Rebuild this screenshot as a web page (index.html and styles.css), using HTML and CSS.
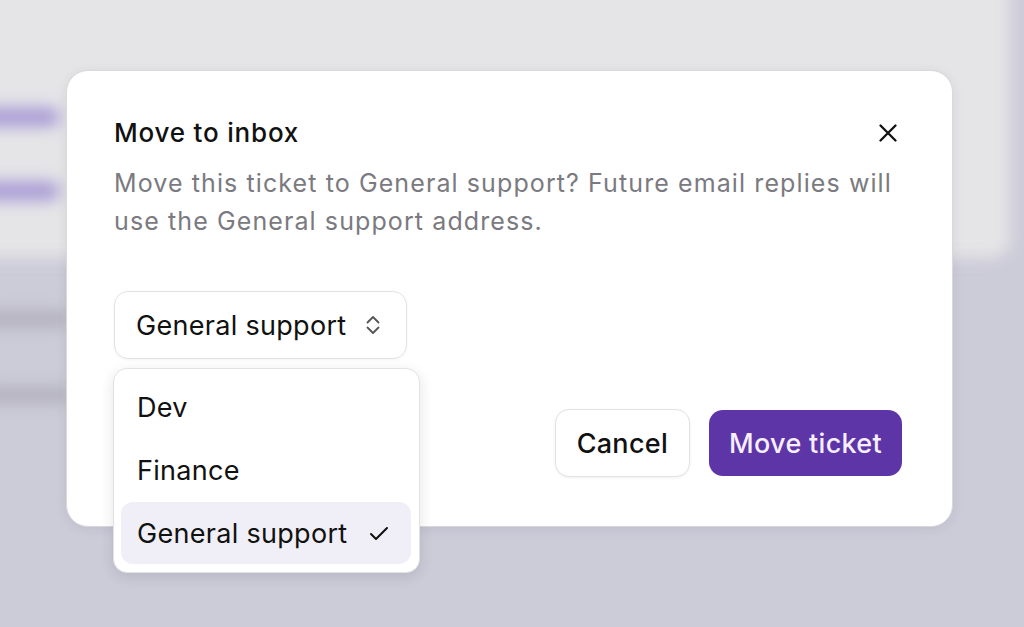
FILE: index.html
```html
<!DOCTYPE html>
<html lang="en">
<head>
  <meta charset="UTF-8" />
  <meta name="viewport" content="width=device-width, initial-scale=1.0" />
  <title>Move to inbox</title>
  <link rel="stylesheet" href="styles.css">
</head>
<body>
  <div class="page">
    <div class="panel">
      <div class="blur-line purple l1"></div>
      <div class="blur-line purple l2"></div>
    </div>
    <div class="rows">
      <div class="blur-line gray"></div>
      <div class="blur-line gray"></div>
    </div>
  </div>

  <div class="modal">
    <div class="modal-head">
      <h2>Move to inbox</h2>
      <button class="close" aria-label="Close">
        <svg width="22" height="22" viewBox="0 0 22 22" fill="none" stroke="#111" stroke-width="2.3" stroke-linecap="round">
          <path d="M3.5 3.5L18.5 18.5M18.5 3.5L3.5 18.5" />
        </svg>
      </button>
    </div>
    <p class="desc">Move this ticket to General support? Future email replies will use the General support address.</p>

    <div class="select-wrap">
      <div class="select">
        <span>General support</span>
        <svg width="18" height="22" viewBox="0 0 18 22" fill="none" stroke="#555" stroke-width="1.8" stroke-linecap="round" stroke-linejoin="round">
          <path d="M3.5 8.5L9 3L14.5 8.5" />
          <path d="M3.5 13.5L9 19L14.5 13.5" />
        </svg>
      </div>
      <div class="menu">
        <div class="option">Dev</div>
        <div class="option">Finance</div>
        <div class="option selected">
          <span>General support</span>
          <svg width="20" height="16" viewBox="0 0 20 16" fill="none" stroke="#111" stroke-width="2" stroke-linecap="round" stroke-linejoin="round">
            <path d="M2 9L7 14L18 3" />
          </svg>
        </div>
      </div>
    </div>

    <div class="modal-foot">
      <button class="btn btn-light">Cancel</button>
      <button class="btn btn-primary">Move ticket</button>
    </div>
  </div>
</body>
</html>
```

FILE: styles.css
```css
* {
  box-sizing: border-box;
  margin: 0;
  padding: 0;
  font-family: 'Inter', 'Noto Sans', sans-serif;
}
body {
  background: #cccbd8;
  width: 1024px;
  height: 627px;
  overflow: hidden;
}
.page {
  filter: blur(8px);
}
.panel {
  height: 278px;
  margin: -20px 14px 0 -20px;
  padding-top: 128px;
  background: #e5e5e7;
  border-radius: 0 0 18px 0;
}
.blur-line {
  height: 18px;
  border-radius: 9px;
}
.purple {
  background: #a597d4;
  width: 80px;
}
.purple.l2 {
  margin-top: 56px;
}
.rows {
  padding-top: 54px;
}
.gray {
  background: #aeadb8;
  width: 90px;
  margin-left: -20px;
  margin-bottom: 62px;
  height: 14px;
}

.modal {
  position: absolute;
  left: 66px;
  top: 70px;
  width: 887px;
  background: #fff;
  border: 1px solid #d9d9dd;
  border-radius: 22px;
  padding: 46px 50px 49px 47px;
  box-shadow: 0 2px 12px rgba(40, 40, 60, 0.08);
}
.modal-head {
  display: flex;
  justify-content: space-between;
  align-items: center;
  height: 32px;
}
.modal-head h2 {
  font-size: 26px;
  font-weight: 500;
  color: #111;
  line-height: 32px;
  letter-spacing: 0.8px;
}
.close {
  background: none;
  border: none;
  width: 22px;
  height: 22px;
  margin-right: 3px;
  display: flex;
}
.desc {
  margin-top: 15px;
  font-size: 25px;
  line-height: 38px;
  color: #7a7a80;
  letter-spacing: 1.1px;
}

.select-wrap {
  position: relative;
  margin-top: 51px;
  width: 293px;
}
.select {
  height: 68px;
  border: 1px solid #e2e2e6;
  border-radius: 14px;
  padding: 0 24px 0 21px;
  display: flex;
  align-items: center;
  justify-content: space-between;
  font-size: 27px;
  letter-spacing: 0.3px;
  color: #111;
  box-shadow: 0 1px 3px rgba(0, 0, 0, 0.05);
}
.menu {
  position: absolute;
  top: 77px;
  left: -1px;
  width: 307px;
  background: #fff;
  border: 1px solid #e2e2e6;
  border-radius: 14px;
  padding: 7px 8px 8px 7px;
  box-shadow: 0 4px 14px rgba(30, 30, 50, 0.12);
  z-index: 2;
}
.option {
  height: 63px;
  display: flex;
  align-items: center;
  justify-content: space-between;
  padding: 0 22px 0 16px;
  font-size: 27px;
  letter-spacing: 0.3px;
  color: #111;
  border-radius: 12px;
}
.option.selected {
  background: #f0eff7;
  height: 62px;
}

.modal-foot {
  display: flex;
  justify-content: flex-end;
  align-items: center;
  gap: 19px;
  margin-top: 50px;
}
.btn {
  height: 68px;
  font-size: 27px;
  font-weight: 500;
  letter-spacing: 0.3px;
  border-radius: 14px;
  padding: 0 21px;
  cursor: pointer;
}
.btn-light {
  background: #fff;
  color: #111;
  border: 1px solid #e2e2e6;
  box-shadow: 0 1px 3px rgba(0, 0, 0, 0.06);
}
.btn-primary {
  background: #5d35a6;
  color: #f5efff;
  border: none;
  height: 66px;
  padding: 0 20px;
}
```
